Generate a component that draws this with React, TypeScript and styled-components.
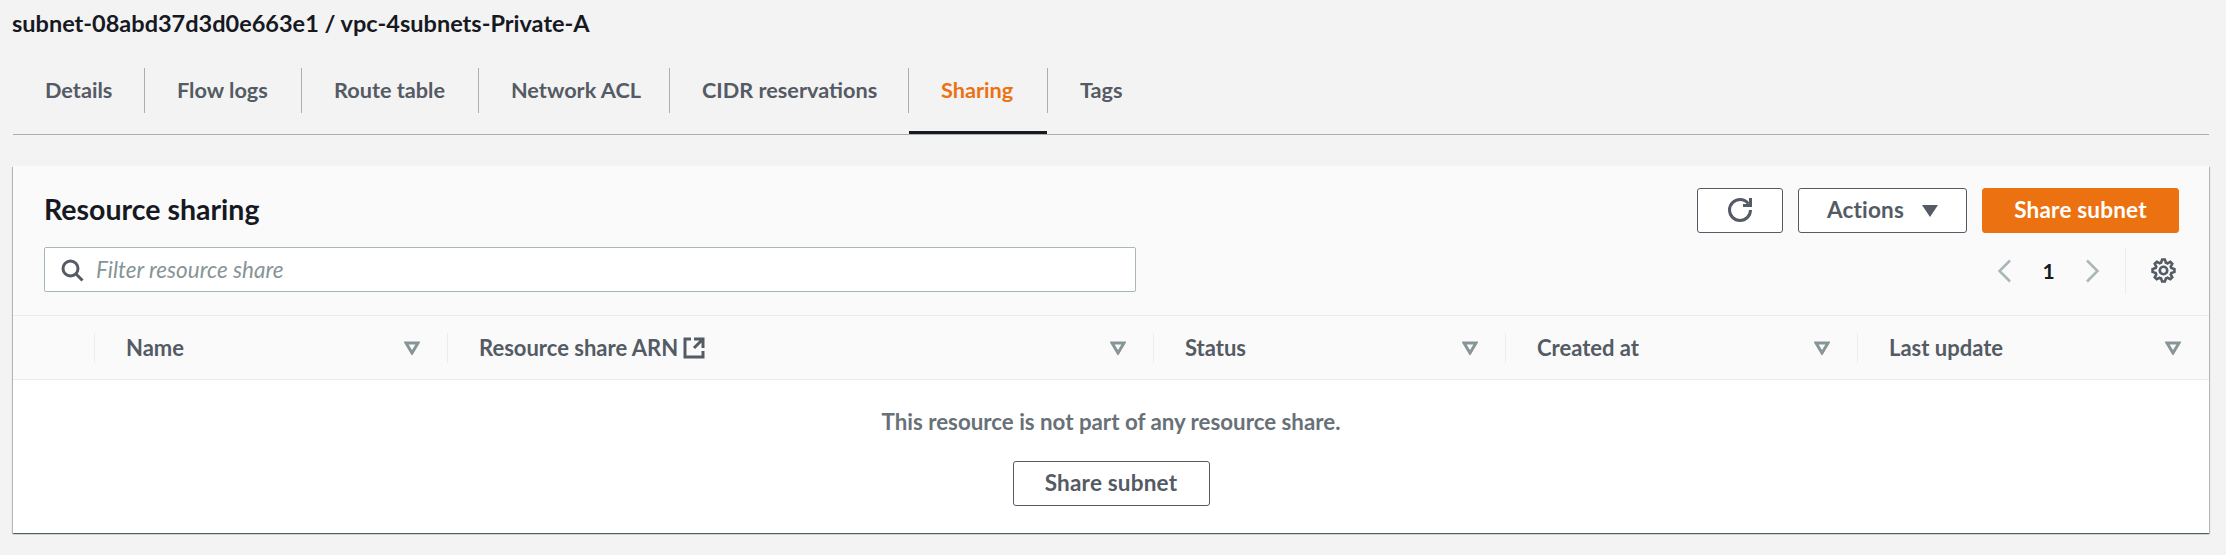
import React from "react";
import styled, { createGlobalStyle } from "styled-components";

const GlobalStyle = createGlobalStyle`
  html, body {
    margin: 0;
    padding: 0;
    background: #f3f3f3;
    font-family: Lato, "Open Sans", sans-serif;
  }
`;

const tabs = [
  { label: "Details", width: 132 },
  { label: "Flow logs", width: 157 },
  { label: "Route table", width: 177 },
  { label: "Network ACL", width: 191 },
  { label: "CIDR reservations", width: 239 },
  { label: "Sharing", width: 139, active: true },
  { label: "Tags", width: 130 },
];

const columns = [
  { label: "Name" },
  { label: "Resource share ARN", external: true },
  { label: "Status" },
  { label: "Created at" },
  { label: "Last update" },
];

const Icon = ({ size = 22, children }: { size?: number; children: React.ReactNode }) => (
  <svg
    width={size}
    height={size}
    viewBox="0 0 16 16"
    fill="none"
    stroke="currentColor"
    strokeWidth="2"
    style={{ display: "block", flexShrink: 0 }}
  >
    {children}
  </svg>
);

const SortIcon = () => (
  <SortWrap>
    <svg width="16" height="14" viewBox="0 0 16 14">
      <path d="M2 2h12L8 12z" fill="none" stroke="currentColor" strokeWidth="3" strokeLinejoin="miter" />
    </svg>
  </SortWrap>
);

const App = () => {
  return (
    <Page>
      <GlobalStyle />
      <Title>subnet-08abd37d3d0e663e1 / vpc-4subnets-Private-A</Title>
      <TabBar>
        {tabs.map((tab, index) => (
          <Tab key={tab.label} $width={tab.width} $active={tab.active} $last={index === tabs.length - 1}>
            {tab.label}
          </Tab>
        ))}
      </TabBar>

      <Panel>
        <PanelHeader>
          <HeaderTop>
            <Heading>Resource sharing</Heading>
            <Actions>
              <Button $width={86}>
                <Icon size={24}>
                  <path d="M10 5h5V0" />
                  <path d="M15 8a6.99 6.99 0 0 1-7 7 6.99 6.99 0 0 1-7-7 6.99 6.99 0 0 1 7-7 6.95 6.95 0 0 1 5.63 2.87" />
                </Icon>
              </Button>
              <Button $width={169}>
                Actions
                <Caret>
                  <svg width="16" height="12" viewBox="0 0 16 12">
                    <path d="M0 0h16L8 12z" fill="currentColor" />
                  </svg>
                </Caret>
              </Button>
              <Button $width={197} $primary>
                Share subnet
              </Button>
            </Actions>
          </HeaderTop>
          <HeaderBottom>
            <Filter>
              <FilterIcon>
                <Icon size={24}>
                  <circle cx="7" cy="7" r="5" />
                  <path d="M15 15l-4.5-4.5" />
                </Icon>
              </FilterIcon>
              <FilterPlaceholder>Filter resource share</FilterPlaceholder>
            </Filter>
            <Pager>
              <PagerArrow>
                <Icon size={24}>
                  <path d="M12 1L5 8l7 7" strokeWidth="1.7" />
                </Icon>
              </PagerArrow>
              <PagerNumber>1</PagerNumber>
              <PagerArrow>
                <Icon size={24}>
                  <path d="M4 1l7 7-7 7" strokeWidth="1.7" />
                </Icon>
              </PagerArrow>
              <PagerDivider />
              <GearButton>
                <Icon size={25}>
                  <path d="M13.3 5.2l1.1-2.1L13 1.7l-2.1 1.1c-.3-.2-.7-.3-1.1-.4L9 0H7l-.8 2.3c-.3.1-.7.2-1 .4L3.1 1.6 1.6 3.1l1.1 2.1c-.2.3-.3.7-.4 1L0 7v2l2.3.8c.1.4.3.7.4 1.1l-1.1 2.1 1.4 1.4 2.1-1.1c.3.2.7.3 1.1.4L7 16h2l.8-2.3c.4-.1.7-.3 1.1-.4l2.1 1.1 1.4-1.4-1.1-2.1c.2-.3.3-.7.4-1.1L16 9V7l-2.3-.8c-.1-.3-.2-.7-.4-1z" strokeWidth="1.9" transform="translate(1 1) scale(.875)" />
                  <circle cx="8" cy="8" r="2.4" strokeWidth="1.7" />
                </Icon>
              </GearButton>
            </Pager>
          </HeaderBottom>
        </PanelHeader>

        <TableHead>
          <HeadCell />
          {columns.map((col) => (
            <HeadCell key={col.label}>
              <HeadLabel>
                {col.label}
                {col.external && (
                  <Icon size={24}>
                    <path d="M14 8.01v-6H8M14.02 2 8 8M6 2H2v12h12v-4" />
                  </Icon>
                )}
              </HeadLabel>
              <SortIcon />
            </HeadCell>
          ))}
        </TableHead>

        <Empty>
          <EmptyText>This resource is not part of any resource share.</EmptyText>
          <Button $width={197}>Share subnet</Button>
        </Empty>
      </Panel>
    </Page>
  );
};

const Page = styled.div`
  width: 2226px;
  height: 555px;
  box-sizing: border-box;
  padding: 0 17px 0 13px;
  overflow: hidden;
  background: #f3f3f3;
`;

const Title = styled.div`
  height: 46px;
  line-height: 46px;
  margin-left: -1px;
  font-size: 23.5px;
  font-weight: 700;
  color: #16191f;
`;

const TabBar = styled.div`
  display: flex;
  height: 89px;
  box-sizing: border-box;
  border-bottom: 1px solid #a9b0b0;
  padding-top: 22px;
`;

const Tab = styled.div<{ $width: number; $active?: boolean; $last?: boolean }>`
  position: relative;
  box-sizing: border-box;
  width: ${(p) => p.$width}px;
  height: 45px;
  line-height: 45px;
  padding-left: 32px;
  font-size: 21.7px;
  font-weight: 700;
  color: ${(p) => (p.$active ? "#ec7211" : "#545b64")};
  border-right: ${(p) => (p.$last ? "none" : "1px solid #a9b0b0")};

  ${(p) =>
    p.$active &&
    `
    &::after {
      content: "";
      position: absolute;
      left: 0;
      right: 0;
      top: 63px;
      height: 3px;
      background: #16191f;
    }
  `}
`;

const Panel = styled.div`
  margin-top: 31px;
  height: 367px;
  display: flex;
  flex-direction: column;
  background: #fff;
  box-shadow: 0 1px 1px 0 rgba(0, 28, 36, 0.5), 1px 1px 1px 0 rgba(0, 28, 36, 0.2), -1px 1px 1px 0 rgba(0, 28, 36, 0.2);
`;

const PanelHeader = styled.div`
  height: 150px;
  box-sizing: border-box;
  padding: 22px 30px 0 31px;
  background: #fafafa;
  border-bottom: 1px solid #eaeded;
`;

const HeaderTop = styled.div`
  display: flex;
  justify-content: space-between;
  align-items: center;
  height: 45px;
`;

const Heading = styled.h2`
  margin: 0 0 4px;
  font-size: 28.5px;
  font-weight: 700;
  color: #16191f;
`;

const Actions = styled.div`
  display: flex;
  gap: 15px;
`;

const Button = styled.button<{ $width: number; $primary?: boolean }>`
  display: flex;
  align-items: center;
  justify-content: center;
  box-sizing: border-box;
  width: ${(p) => p.$width}px;
  height: 45px;
  padding: 0 0 2px;
  font-family: inherit;
  font-size: 22.5px;
  font-weight: 700;
  letter-spacing: 0.2px;
  border-radius: 3px;
  border: 1px solid ${(p) => (p.$primary ? "#ec7211" : "#545b64")};
  background: ${(p) => (p.$primary ? "#ec7211" : "#fff")};
  color: ${(p) => (p.$primary ? "#fff" : "#545b64")};
`;

const Caret = styled.span`
  display: flex;
  margin-left: 18px;
  padding-top: 2px;
`;

const HeaderBottom = styled.div`
  display: flex;
  justify-content: space-between;
  align-items: center;
  margin-top: 14px;
  height: 47px;
`;

const Filter = styled.div`
  display: flex;
  align-items: center;
  align-self: flex-start;
  box-sizing: border-box;
  width: 1092px;
  height: 45px;
  background: #fff;
  border: 1px solid #aab7b8;
  border-radius: 2px;
  padding-left: 15px;
`;

const FilterIcon = styled.span`
  display: flex;
  color: #545b64;
`;

const FilterPlaceholder = styled.span`
  margin-left: 12px;
  font-size: 22.5px;
  font-style: italic;
  color: #879596;
`;

const Pager = styled.div`
  display: flex;
  align-items: center;
  height: 47px;
  margin-right: 3px;
`;

const PagerArrow = styled.span`
  display: flex;
  color: #aab7b8;
`;

const PagerNumber = styled.span`
  width: 65px;
  text-align: center;
  font-size: 21px;
  font-weight: 700;
  color: #16191f;
`;

const PagerDivider = styled.span`
  width: 1px;
  height: 47px;
  margin-left: 20px;
  background: #eaeded;
`;

const GearButton = styled.span`
  display: flex;
  margin-left: 25px;
  color: #545b64;
`;

const TableHead = styled.div`
  display: grid;
  grid-template-columns: 82px 353px 706px 352px 352px 351px;
  align-items: center;
  height: 64px;
  box-sizing: border-box;
  background: #fafafa;
  border-bottom: 1px solid #eaeded;
`;

const HeadCell = styled.div`
  display: flex;
  align-items: center;
  justify-content: space-between;
  box-sizing: border-box;
  height: 30px;
  padding: 0 27px 0 31px;
  border-right: 1px solid #eaeded;

  &:last-child {
    border-right: none;
    padding-right: 28px;
  }
`;

const HeadLabel = styled.span`
  display: flex;
  align-items: center;
  gap: 4px;
  font-size: 22px;
  font-weight: 700;
  color: #545b64;
`;

const SortWrap = styled.span`
  display: flex;
  color: #879596;
`;

const Empty = styled.div`
  flex: 1;
  display: flex;
  flex-direction: column;
  align-items: center;
  padding-top: 28px;
`;

const EmptyText = styled.div`
  font-size: 22.3px;
  line-height: 28px;
  font-weight: 700;
  color: #687078;
  margin-bottom: 25px;
`;

export default App;
